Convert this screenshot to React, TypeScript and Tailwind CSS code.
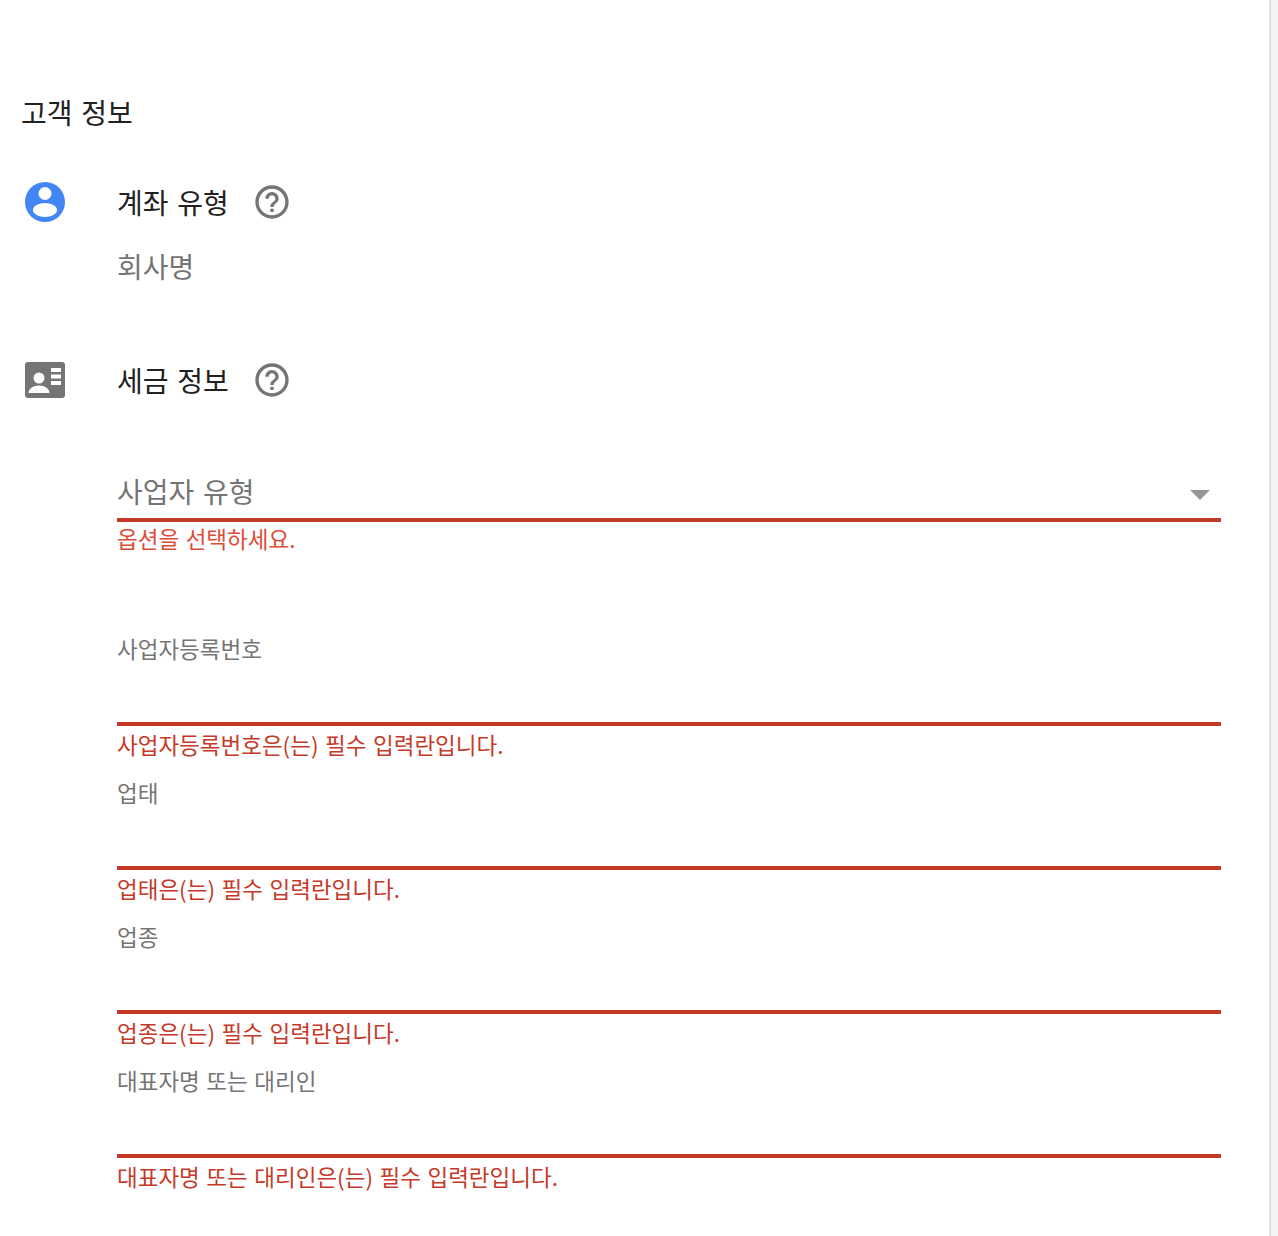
import React from 'react';

const font = { fontFamily: '"Noto Sans CJK KR", "Liberation Sans", sans-serif' };

function HelpIcon() {
  return (
    <svg width="40" height="40" viewBox="0 0 24 24" className="block">
      <path
        fill="#757575"
        d="M11 18h2v-2h-2v2zm1-16C6.48 2 2 6.48 2 12s4.48 10 10 10 10-4.48 10-10S17.52 2 12 2zm0 18c-4.41 0-8-3.59-8-8s3.59-8 8-8 8 3.59 8 8-3.59 8-8 8zm0-14c-2.21 0-4 1.79-4 4h2c0-1.1.9-2 2-2s2 .9 2 2c0 2-3 1.75-3 5h2c0-2.25 3-2.5 3-5 0-2.21-1.79-4-4-4z"
      />
    </svg>
  );
}

function AccountIcon() {
  return (
    <svg width="40" height="40" viewBox="0 0 40 40" className="block">
      <circle cx="20" cy="20" r="20" fill="#4285f4" />
      <circle cx="20" cy="11.5" r="6.5" fill="#fff" />
      <ellipse cx="20" cy="28" rx="12" ry="7" fill="#fff" />
    </svg>
  );
}

function TaxIcon() {
  return (
    <svg width="40" height="36" viewBox="0 0 40 36" className="block">
      <rect width="40" height="36" rx="3" fill="#757575" />
      <circle cx="14" cy="16" r="5.500" fill="#fff" />
      <path d="M3.500 31c0-4.500 5-7.500 10.500-7.500s10.500 3 10.500 7.500z" fill="#fff" />
      <path d="M26 6h10v4H26zM26 12.500h10v4H26zM26 19h10v4H26z" fill="#fff" />
    </svg>
  );
}

function Field({ label, error }: { label: string; error: string }) {
  return (
    <div className="h-[144px]">
      <div className="h-[50px] pt-[1px] text-[22.5px] leading-[30px] text-[#757575] [word-spacing:1.5px]">{label}</div>
      <div className="mt-[40px] h-1 bg-[#c53929]" />
      <div className="mt-[1px] text-[22.5px] leading-[34px] text-[#c53929] [word-spacing:1.5px]">{error}</div>
    </div>
  );
}

export default function App() {
  return (
    <div style={font} className="h-[1236px] overflow-hidden bg-white flex">
      <main className="w-[1269px] pl-[21px] pr-[48px] pt-[92px]">
        <h2 className="text-[28px] leading-[40px] font-normal text-[#212121] [word-spacing:2.5px]">고객 정보</h2>

        <section className="mt-[50px] flex">
          <div className="w-[96px] pl-[4px]">
            <AccountIcon />
          </div>
          <div>
            <div className="flex items-center h-[40px] gap-[23px]">
              <span className="text-[28px] leading-[40px] text-[#212121] [word-spacing:2.5px]">계좌 유형</span>
              <HelpIcon />
            </div>
            <div className="mt-[24px] text-[28px] leading-[40px] text-[#757575]">회사명</div>
          </div>
        </section>

        <section className="mt-[74px] flex">
          <div className="w-[96px] pl-[4px] pt-[2px]">
            <TaxIcon />
          </div>
          <div className="flex-1">
            <div className="flex items-center h-[40px] gap-[23px]">
              <span className="text-[28px] leading-[40px] text-[#212121] [word-spacing:2.5px]">세금 정보</span>
              <HelpIcon />
            </div>

            <div className="mt-[71px] flex items-center justify-between h-[40px]">
              <span className="text-[28px] leading-[40px] text-[#757575] [word-spacing:2.5px]">사업자 유형</span>
              <span className="mr-[11px] mt-[7px] w-0 h-0 border-x-[10px] border-x-transparent border-t-[10px] border-t-[#979797]" />
            </div>
            <div className="mt-[7px] h-1 bg-[#c53929]" />
            <div className="-mt-[1px] text-[22.5px] leading-[34px] text-[#dd4b39] [word-spacing:1.5px]">옵션을 선택하세요.</div>

            <div className="mt-[77px]">
              <Field label="사업자등록번호" error="사업자등록번호은(는) 필수 입력란입니다." />
              <Field label="업태" error="업태은(는) 필수 입력란입니다." />
              <Field label="업종" error="업종은(는) 필수 입력란입니다." />
              <Field label="대표자명 또는 대리인" error="대표자명 또는 대리인은(는) 필수 입력란입니다." />
            </div>
          </div>
        </section>
      </main>
      <div className="w-[9px] h-full bg-[#f1f3f4] border-l-2 border-l-[#dfe1e5]" />
    </div>
  );
}
